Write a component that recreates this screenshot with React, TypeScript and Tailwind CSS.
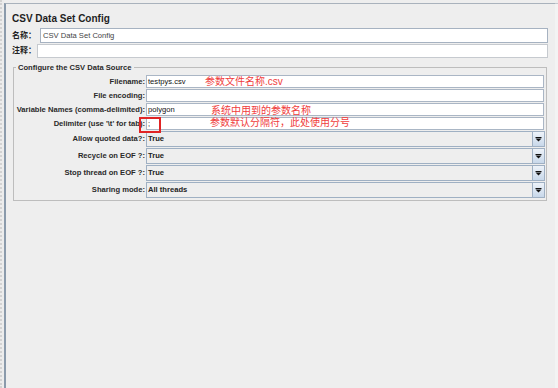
import React from "react";

const FONT = { fontFamily: '"Liberation Sans", Arial, "Noto Sans CJK SC", sans-serif' };
const CJK = { fontFamily: '"Liberation Sans", "Noto Sans CJK SC", sans-serif' };

function Arrow() {
  return (
    <svg width="7" height="5" viewBox="0 0 7 5">
      <rect x="0.5" y="0" width="6" height="1" fill="#111" />
      <path d="M0.5 1.5 L6.5 1.5 L3.5 4.5 Z" fill="#111" />
    </svg>
  );
}

function TextRow({
  label,
  value,
  children,
}: {
  label: string;
  value?: string;
  children?: React.ReactNode;
}) {
  return (
    <div className="flex h-[14px]">
      <div className="w-[132px] shrink-0 pr-[1px] text-right text-[7.6px] font-bold leading-[13px] text-[#2a2a2a]">
        {label}
      </div>
      <div className="relative h-[13px] flex-1 border border-[#aab6c5] bg-white pl-[1px] text-[7.6px] leading-[11px] text-[#111111]">
        {value}
        {children}
      </div>
    </div>
  );
}

function ComboRow({ label, value }: { label: string; value: string }) {
  return (
    <div className="flex h-[17px]">
      <div className="w-[132px] shrink-0 pr-[1px] text-right text-[7.6px] font-bold leading-[16px] text-[#2a2a2a]">
        {label}
      </div>
      <div className="mr-[-1px] flex h-[16px] flex-1 border border-[#9fb0c3] bg-[#eeeeee]">
        <div className="flex-1 pl-[1px] text-[7.6px] font-bold leading-[14px] text-[#222222]">
          {value}
        </div>
        <div className="flex w-[12px] items-center justify-center border-l border-[#9fb0c3] bg-gradient-to-b from-[#eef3f9] to-[#c8d8ea]">
          <Arrow />
        </div>
      </div>
    </div>
  );
}

function Note({ children, className }: { children: React.ReactNode; className: string }) {
  return (
    <span
      className={"absolute whitespace-nowrap text-[10px] leading-[12px] text-[#f03c3c] " + className}
      style={CJK}
    >
      {children}
    </span>
  );
}

export default function App() {
  return (
    <div className="flex h-[388px] w-[558px] overflow-hidden bg-[#eeeeee]" style={FONT}>
      <div className="w-[4px] shrink-0 border-l-[2px] border-dotted border-[#d2d2d2] bg-[#ececec]" />
      <div className="mt-[3px] flex flex-1 flex-col border-l-[2px] border-t border-[#8a9aab] border-t-[#a9b2bc] pl-[6px] pr-[7px]">
        <div className="mt-[9px] text-[10px] font-bold leading-[12px] text-[#1e1e1e]">
          CSV Data Set Config
        </div>
        <div className="mt-[3px] flex h-[15px]">
          <div className="w-[28px] shrink-0 text-[8px] font-bold leading-[15px] text-[#222222]" style={CJK}>
            名称：
          </div>
          <div className="h-[15px] flex-1 border border-[#a6b2c1] bg-white pl-[2px] text-[7.6px] leading-[13px] text-[#444444]">
            CSV Data Set Config
          </div>
        </div>
        <div className="mt-[1px] flex h-[14px]">
          <div className="w-[25px] shrink-0 text-[8px] font-bold leading-[14px] text-[#222222]" style={CJK}>
            注释：
          </div>
          <div className="h-[14px] flex-1 border border-[#c6cacf] bg-white" />
        </div>
        <fieldset className="mt-[5px] ml-[1px] mr-[1px] border border-[#bdbdbd] pb-[1px] pr-[2px] pt-[3px]">
          <legend className="ml-[2px] px-[2px] text-[7.6px] font-bold leading-[9px] text-[#2a2a2a]">
            Configure the CSV Data Source
          </legend>
          <TextRow label="Filename:" value="testpys.csv">
            <Note className="left-[58px] top-[0px]">参数文件名称.csv</Note>
          </TextRow>
          <TextRow label="File encoding:" />
          <TextRow label="Variable Names (comma-delimited):" value="polygon">
            <Note className="left-[64px] top-[1px]">系统中用到的参数名称</Note>
          </TextRow>
          <TextRow label="Delimiter (use '\t' for tab):" value=";">
            <Note className="left-[63px] top-[-1px]">参数默认分隔符，此处使用分号</Note>
            <span className="absolute left-[-8px] top-[-1px] h-[16px] w-[22px] border-2 border-[#e02424]" />
          </TextRow>
          <ComboRow label="Allow quoted data?:" value="True" />
          <ComboRow label="Recycle on EOF ?:" value="True" />
          <ComboRow label="Stop thread on EOF ?:" value="True" />
          <ComboRow label="Sharing mode:" value="All threads" />
        </fieldset>
      </div>
      <div className="mt-[3px] w-[3px] shrink-0 border-t border-[#c4cad0] bg-[#f3f3f3]" />
    </div>
  );
}
